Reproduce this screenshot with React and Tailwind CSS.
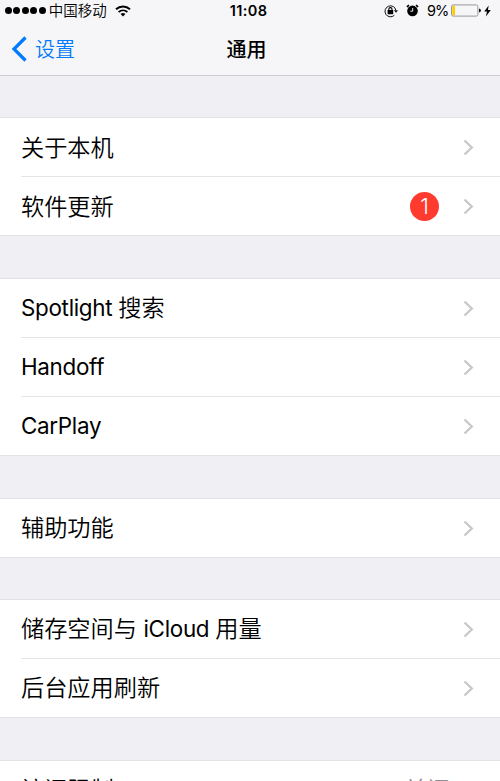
import React from 'react';

const groups = [
  { top: 'mt-[41px]', rows: [{ label: '关于本机', nudge: true }, { label: '软件更新', badge: 1, nudge: true }] },
  { top: 'mt-[42px]', rows: [{ label: 'Spotlight 搜索' }, { label: 'Handoff' }, { label: 'CarPlay' }] },
  { top: 'mt-[42px]', rows: [{ label: '辅助功能' }] },
  { top: 'mt-[41px]', rows: [{ label: '储存空间与 iCloud 用量' }, { label: '后台应用刷新' }] },
  { top: 'mt-[42px]', rows: [{ label: '访问限制', value: '关闭' }] },
];

function Label({ text }) {
  return text.split(/([A-Za-z]+ ?)/).filter(Boolean).map((part, i) =>
    /[A-Za-z]/.test(part) ? (
      <span key={i} className="whitespace-pre text-[22.4px] font-normal tracking-[-0.3px]">{part}</span>
    ) : (
      <span key={i} className="whitespace-pre">{part}</span>
    ),
  );
}

function Chevron() {
  return (
    <svg width="11" height="17" viewBox="0 0 11 17" fill="none" className="shrink-0">
      <path d="M1.5 1.5 L8.8 8.5 L1.5 15.5" stroke="#c7c7cc" strokeWidth="2.3" />
    </svg>
  );
}

function Row({ label, badge, value, nudge, last }) {
  return (
    <div className="pl-[21px]">
      <div className={`flex items-center pr-[26px] ${last ? 'h-[58px]' : 'h-[59px] border-b border-[#e5e5e8]'}`}>
        <span className={`flex-1 whitespace-nowrap text-[23.2px] font-[350] leading-[30px] text-black ${nudge ? 'pt-px' : ''}`}>
          <Label text={label} />
        </span>
        {badge && (
          <span className="mr-[24px] flex size-[29px] items-center justify-center rounded-full bg-[#ff3b30] text-[22px] font-[350] leading-none text-white">
            {badge}
          </span>
        )}
        {value && <span className="mr-[13px] text-[23px] font-[350] leading-[30px] text-[#8e8e93]">{value}</span>}
        <Chevron />
      </div>
    </div>
  );
}

function StatusBar() {
  return (
    <div className="flex h-[21px] items-center pl-[5px] text-black">
      <div className="flex gap-[1.6px]">
        {[0, 1, 2, 3, 4].map((n) => (
          <span key={n} className="size-[6.9px] rounded-full bg-black" />
        ))}
      </div>
      <span className="ml-[3px] text-[14.5px] font-[350] leading-[20px]">中国移动</span>
      <svg className="ml-[8px]" width="16" height="12" viewBox="0 0 16 12" fill="none">
        <path d="M1 4.3 C5 0.5 11 0.5 15 4.3" stroke="#000" strokeWidth="1.9" />
        <path d="M3.6 7 C6.2 4.7 9.8 4.7 12.4 7" stroke="#000" strokeWidth="1.8" />
        <path d="M5.6 9.1 C7 7.7 9 7.7 10.4 9.1 L8 11.5 Z" fill="#000" />
      </svg>
      <span className="ml-[99px] w-[40px] text-[14.5px] font-semibold leading-[20px] tracking-[0.35px]">11:08</span>
      <div className="ml-auto flex items-center pr-[9px]">
        <svg width="14" height="14" viewBox="0 0 14 14" fill="none">
          <path d="M10.3 11.3 A5.5 5.5 0 1 1 11.9 6.3" stroke="#111" strokeWidth="1" />
          <path d="M9.9 6.2 H14 L12 8.8 Z" fill="#111" />
          <rect x="3.6" y="6" width="5.6" height="4.2" rx="0.4" fill="#000" />
          <path d="M4.8 6.5 V5.2 A1.6 1.6 0 0 1 8 5.2 V6.5" stroke="#000" strokeWidth="1.1" />
        </svg>
        <svg className="ml-[8px]" width="13" height="13" viewBox="0 0 13 13" fill="none">
          <circle cx="6.5" cy="6.9" r="5.3" fill="#000" />
          <path d="M0.9 2.9 L3 1.1 M12.1 2.9 L10 1.1" stroke="#000" strokeWidth="1.6" />
          <path d="M6.7 4 V7.2 H4.3" stroke="#fff" strokeWidth="0.9" />
        </svg>
        <span className="ml-[8px] w-[21px] whitespace-nowrap text-[14.5px] leading-[20px] tracking-[-0.9px]">9%</span>
        <svg className="ml-[3px]" width="30" height="13" viewBox="0 0 30 13" fill="none">
          <rect x="0.5" y="0.9" width="26.4" height="11.2" rx="1.7" stroke="#98989c" />
          <path d="M1.3 2.4 Q1.3 1.7 2 1.7 H4 V11.3 H2 Q1.3 11.3 1.3 10.6 Z" fill="#ffcc00" />
          <path d="M28 4.5 Q30 5 30 6.5 Q30 8 28 8.5 Z" fill="#111" />
        </svg>
        <svg className="ml-[3px]" width="7" height="12" viewBox="0 0 7 12">
          <path d="M4.7 0.6 L0.2 6.6 H3 L1.9 11.4 L6.8 5 H3.9 Z" fill="#000" />
        </svg>
      </div>
    </div>
  );
}

export default function App() {
  return (
    <div className="h-[781px] w-[500px] overflow-hidden bg-[#efeff4] font-['Inter','Noto_Sans_CJK_SC',sans-serif]">
      <header className="h-[76px] border-b border-[#cfcfd3] bg-[#f6f6f8]">
        <StatusBar />
        <div className="grid h-[56px] grid-cols-3 items-center pl-[11px] pr-[18px]">
          <div className="flex items-center text-[#007aff]">
            <svg width="17" height="26" viewBox="0 0 17 26" fill="none">
              <path d="M14.5 1.5 L3 13 L14.5 24.5" stroke="currentColor" strokeWidth="3.2" />
            </svg>
            <span className="ml-[7px] pt-px text-[20px] font-[350] leading-[28px]">设置</span>
          </div>
          <h1 className="pt-px text-center text-[20px] font-medium leading-[28px] text-black">通用</h1>
          <span />
        </div>
      </header>
      <main>
        {groups.map((group, i) => (
          <section key={i} className={`${group.top} border-y border-[#e3e3e7] bg-white`}>
            {group.rows.map((row, j) => (
              <Row key={row.label} {...row} last={j === group.rows.length - 1} />
            ))}
          </section>
        ))}
      </main>
    </div>
  );
}
